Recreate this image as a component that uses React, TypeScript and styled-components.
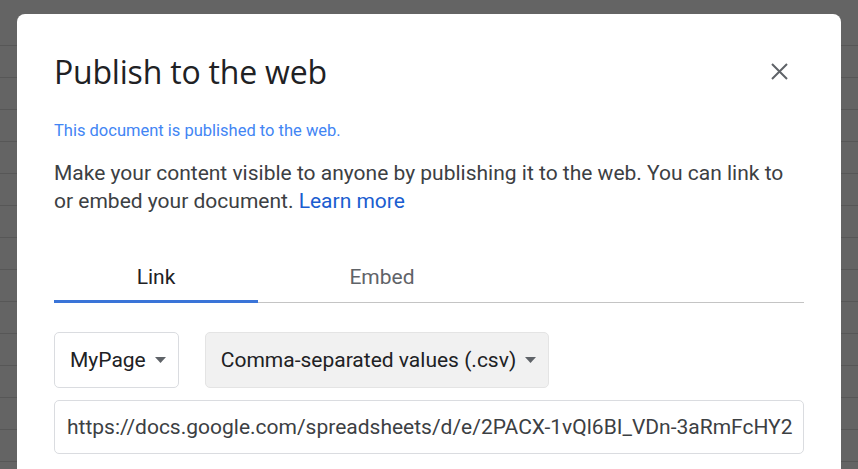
import React from "react";
import styled, { createGlobalStyle } from "styled-components";

const Global = createGlobalStyle`
  html, body { margin: 0; padding: 0; }
  body {
    width: 858px;
    height: 469px;
    overflow: hidden;
    background-color: #646464;
    background-image: repeating-linear-gradient(
      to bottom,
      transparent 0px,
      transparent 31px,
      #575757 31px,
      #575757 32px
    );
    background-position: 0 14px;
    font-family: Roboto, "Liberation Sans", sans-serif;
  }
`;

const Backdrop = styled.div`
  height: 469px;
  padding: 14px 17px 0 17px;
  box-sizing: border-box;
  overflow: hidden;
`;

const Dialog = styled.div`
  background: #ffffff;
  border-radius: 8px 8px 0 0;
  height: 520px;
  padding: 0 37px;
  box-sizing: border-box;
  display: flex;
  flex-direction: column;
`;

const Header = styled.div`
  display: flex;
  align-items: center;
  justify-content: space-between;
  height: 106px;
  padding-top: 8px;
  box-sizing: border-box;
`;

const Title = styled.h1`
  margin: 0;
  font-family: "Open Sans", Roboto, sans-serif;
  font-weight: 400;
  font-size: 32px;
  color: #202124;
  letter-spacing: -0.2px;
`;

const CloseButton = styled.button`
  border: 0;
  background: transparent;
  padding: 0;
  width: 24px;
  height: 24px;
  margin-right: 13px;
  display: flex;
  align-items: center;
  justify-content: center;
  cursor: pointer;
`;

const Status = styled.div`
  font-size: 16.5px;
  color: #4285f4;
  line-height: 20px;
  padding-top: 1px;
`;

const Description = styled.p`
  margin: 18px 0 0 0;
  font-size: 21px;
  line-height: 28px;
  color: #3c4043;
`;

const LearnMore = styled.a`
  color: #1a5dd0;
  text-decoration: none;
`;

const Tabs = styled.div`
  display: flex;
  margin-top: 50px;
  border-bottom: 1px solid #c4c4c4;
`;

const Tab = styled.div<{ $active?: boolean; $width: number }>`
  width: ${(p) => p.$width}px;
  text-align: center;
  font-size: 21px;
  line-height: 24px;
  padding-bottom: 14px;
  color: ${(p) => (p.$active ? "#202124" : "#5f6368")};
  box-shadow: ${(p) => (p.$active ? "inset 0 -3px 0 #3a74d8" : "none")};
  margin-bottom: -1px;
`;

const Controls = styled.div`
  display: flex;
  gap: 26px;
  margin-top: 29px;
`;

const Select = styled.div<{ $filled?: boolean }>`
  display: flex;
  align-items: center;
  gap: 9px;
  height: 56px;
  box-sizing: border-box;
  padding: 0 12px 0 15px;
  border: 1px solid ${(p) => (p.$filled ? "#e4e4e4" : "#dadce0")};
  background: ${(p) => (p.$filled ? "#f1f1f1" : "#ffffff")};
  border-radius: 5px;
  font-size: 21px;
  color: #202124;
`;

const UrlField = styled.div`
  margin-top: 12px;
  height: 54px;
  box-sizing: border-box;
  border: 1px solid #dadce0;
  border-radius: 5px;
  display: flex;
  align-items: center;
  padding: 0 12px;
  font-size: 21px;
  color: #3c4043;
  white-space: nowrap;
  overflow: hidden;
`;

const Caret = () => (
  <svg width="11" height="6" viewBox="0 0 11 6">
    <path d="M0 0h11L5.5 6z" fill="#5f6368" />
  </svg>
);

export default function App() {
  return (
    <>
      <Global />
      <Backdrop>
        <Dialog>
          <Header>
            <Title>Publish to the web</Title>
            <CloseButton aria-label="Close">
              <svg width="17" height="17" viewBox="0 0 17 17">
                <path d="M1 1L16 16M16 1L1 16" stroke="#5f6368" strokeWidth="2" />
              </svg>
            </CloseButton>
          </Header>
          <Status>This document is published to the web.</Status>
          <Description>
            Make your content visible to anyone by publishing it to the web. You can link to
            <br />
            or embed your document. <LearnMore href="#">Learn more</LearnMore>
          </Description>
          <Tabs>
            <Tab $active $width={204}>Link</Tab>
            <Tab $width={248}>Embed</Tab>
          </Tabs>
          <Controls>
            <Select>
              MyPage <Caret />
            </Select>
            <Select $filled>
              Comma-separated values (.csv) <Caret />
            </Select>
          </Controls>
          <UrlField>https://docs.google.com/spreadsheets/d/e/2PACX-1vQl6BI_VDn-3aRmFcHY2</UrlField>
        </Dialog>
      </Backdrop>
    </>
  );
}
